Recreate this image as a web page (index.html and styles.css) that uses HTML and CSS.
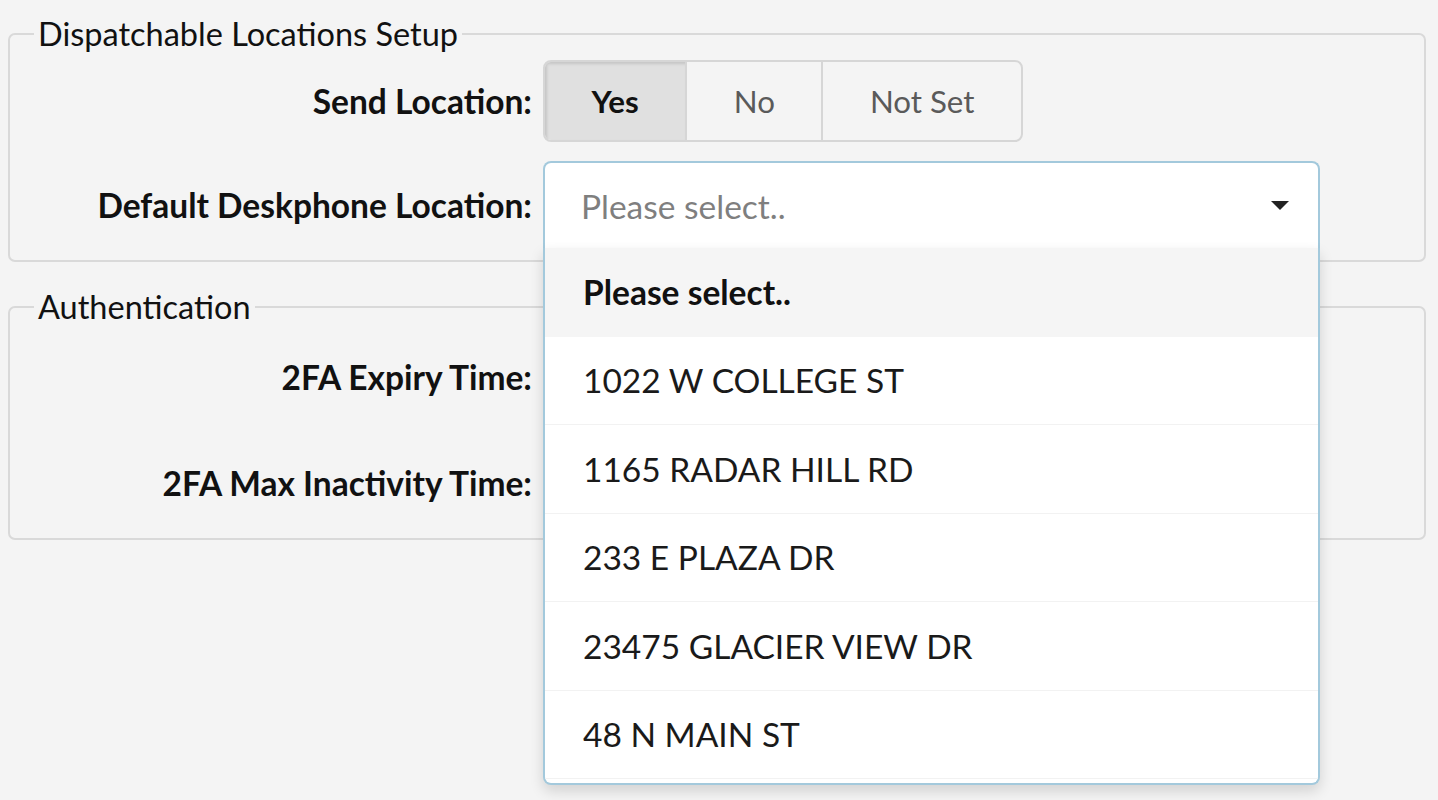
FILE: index.html
```html
<!DOCTYPE html>
<html lang="en">
<head>
<meta charset="utf-8">
<title>Settings</title>
<link rel="stylesheet" href="styles.css">
</head>
<body>
<fieldset class="group">
  <legend class="group-title">Dispatchable Locations Setup</legend>
  <div class="row row-seg">
    <label class="row-label">Send Location:</label>
    <div class="seg">
      <button class="seg-btn is-active">Yes</button>
      <button class="seg-btn">No</button>
      <button class="seg-btn">Not Set</button>
    </div>
  </div>
  <div class="row row-select">
    <label class="row-label">Default Deskphone Location:</label>
    <div class="select">
      <div class="select-head">
        <span class="select-placeholder">Please select..</span>
        <svg class="select-caret" width="18" height="9" viewBox="0 0 18 9"><path d="M0 0H18L9 9Z" fill="#222"/></svg>
      </div>
      <ul class="select-menu">
        <li class="opt is-selected">Please select..</li>
        <li class="opt">1022 W COLLEGE ST</li>
        <li class="opt">1165 RADAR HILL RD</li>
        <li class="opt">233 E PLAZA DR</li>
        <li class="opt">23475 GLACIER VIEW DR</li>
        <li class="opt">48 N MAIN ST</li>
      </ul>
    </div>
  </div>
</fieldset>
<fieldset class="group">
  <legend class="group-title">Authentication</legend>
  <div class="row row-select">
    <label class="row-label">2FA Expiry Time:</label>
    <div class="field-blank"></div>
  </div>
  <div class="row row-select">
    <label class="row-label">2FA Max Inactivity Time:</label>
    <div class="field-blank"></div>
  </div>
</fieldset>
</body>
</html>
```

FILE: styles.css
```css
* { box-sizing: border-box; }
html, body { background: #f4f4f4; }
html { height: 100%; }
body {
  margin: 0;
  min-height: 100%;
  padding: 16px 12px 0 8px;
  font-family: Lato, "Open Sans", sans-serif;
  color: #111;
}
.group {
  margin: 0 0 27px 0;
  padding: 8px 0 12px 0;
  border: 2px solid #d9d9d9;
  border-radius: 7px;
  min-width: 0;
}
.group-title {
  margin-left: 24px;
  padding: 0 4px;
  font-size: 32.5px;
  line-height: 36px;
  font-weight: 400;
  color: #111;
}
.row {
  display: grid;
  grid-template-columns: 522px auto;
  column-gap: 11px;
  align-items: center;
  justify-items: start;
}
.row-seg { height: 82px; margin-bottom: 19px; }
.row-select { height: 87px; }
.row-select + .row-select { margin-top: 19px; }
.row-label {
  justify-self: end;
  font-size: 33.5px;
  font-weight: 700;
  color: #111;
  white-space: nowrap;
}
.seg {
  display: flex;
  height: 82px;
  border: 2px solid #d6d6d6;
  border-radius: 8px;
  overflow: hidden;
  background: #f4f4f4;
}
.seg-btn {
  font-family: inherit;
  font-size: 31.3px;
  color: #5a5a5a;
  background: transparent;
  border: 0;
  padding: 0 46.5px;
  margin: 0;
}
.seg-btn + .seg-btn { border-left: 2px solid #d6d6d6; }
.seg-btn.is-active {
  background: #e0e0e0;
  color: #111;
  font-weight: 700;
  box-shadow: inset 2px 2px 3px rgba(0,0,0,0.12);
}
.select {
  position: relative;
  width: 777px;
  height: 87px;
  z-index: 5;
}
.select-head {
  display: flex;
  align-items: center;
  justify-content: space-between;
  height: 87px;
  padding: 0 29px 0 36px;
  background: #fff;
  border: 2px solid #a3c9dc;
  border-bottom: 0;
  border-radius: 8px 8px 0 0;
}
.select-placeholder {
  font-size: 33.5px;
  color: #7f7f7f;
}
.select-caret { display: block; }
.select-menu {
  position: absolute;
  top: 100%;
  left: 0;
  right: 0;
  margin: 0;
  padding: 0 0 4px 0;
  list-style: none;
  background: #fff;
  border: 2px solid #a3c9dc;
  border-top: 0;
  border-radius: 0 0 8px 8px;
  box-shadow: 0 6px 14px rgba(0,0,0,0.14);
}
.opt {
  height: 88.5px;
  display: flex;
  align-items: center;
  padding-left: 38px;
  font-size: 33.5px;
  color: #1a1a1a;
  border-bottom: 1px solid #f2f2f2;
}
.opt.is-selected {
  background: #f5f5f5;
  font-weight: 700;
  color: #111;
  border-bottom-color: #f5f5f5;
}
.field-blank { width: 777px; height: 87px; }
```
